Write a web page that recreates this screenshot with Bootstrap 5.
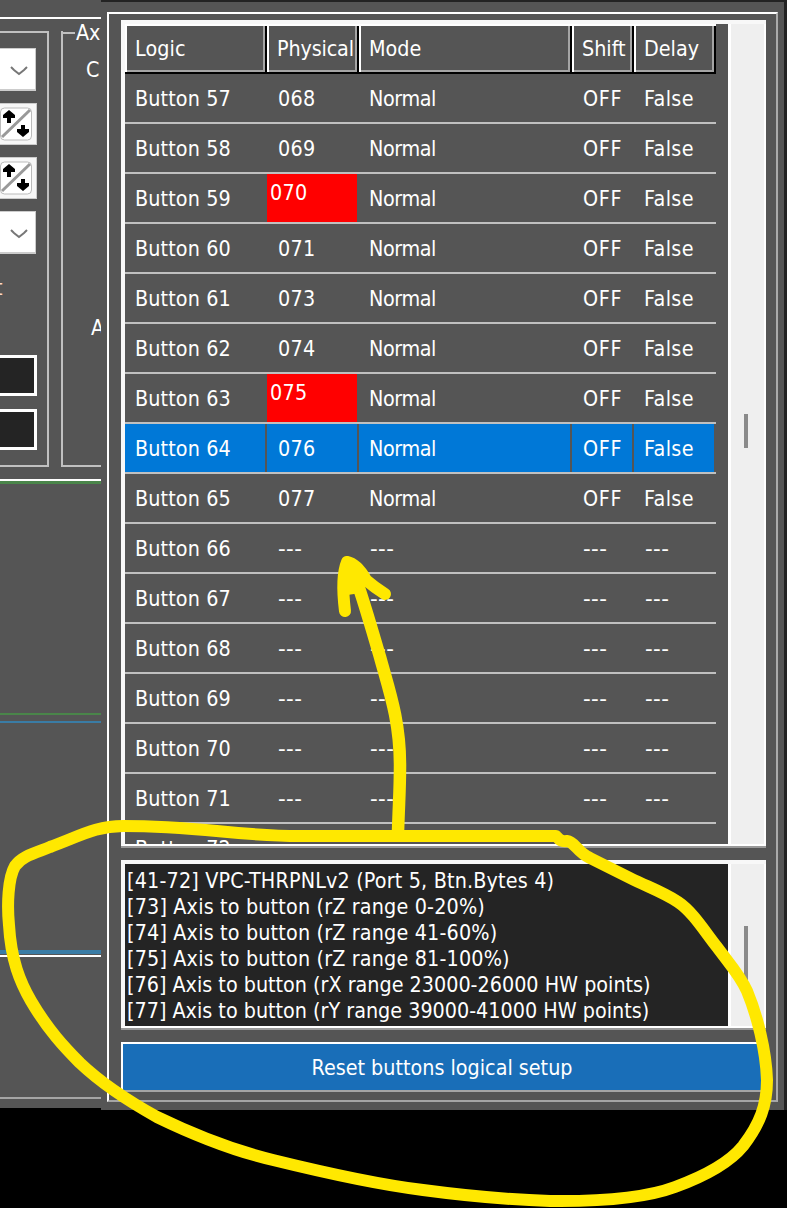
<!DOCTYPE html>
<html lang="en">
<head>
<meta charset="utf-8">
<title>Button logical setup</title>
<link href="https://cdn.jsdelivr.net/npm/bootstrap@5.3.0/dist/css/bootstrap.min.css" rel="stylesheet">
<style>
body{background:#000;color:#fff;font:21.33px/26px "DejaVu Sans Condensed","DejaVu Sans",sans-serif;font-stretch:condensed;letter-spacing:0;width:787px;height:1208px;overflow:hidden}
.tune{width:101px;height:1108px;background:#555;white-space:nowrap}
.line{height:2px;background:#fff}
.green{background:#4a854a}.blue{background:#3a7ca5}.grey{background:#a5a5a5}
.groups{height:436px;margin-top:12px}
.grp-a{width:49px;border:solid #c0c0c0;border-width:2px 2px 2px 0;padding-top:15px}
.grp-b{width:40px;margin-left:12px;border:solid #c0c0c0;border-width:0 0 2px 2px}
.legend{height:26px;margin-top:-11px}
.legend i{width:12px;height:2px;background:#c0c0c0;margin-right:1px}
.combo{width:36px;height:43px;background:#fff;border:solid #ccc;border-width:1px 1px 2px 0}
.flip{width:37px;height:42px;background:#f7f7f7;border:1px solid #ccc;border-left:0}
.edit{width:37px;height:41px;background:#242424;border:3px solid #fff;border-left:0}
.side{width:686px;height:1110px;background:#555;border:solid #232323;border-width:2px 3px 0 0;padding:10px 6px 8px}
.frame{border:2px solid #fff;border-right-color:#aaa;border-bottom-color:#a5a5a5;padding:6px 10px 8px 12px;height:1090px}
.sunk{border:solid #f8f8f8;border-width:4px 0 2px 4px;border-bottom-color:#fff;width:645px;box-shadow:0 2px #999}
.grid-box{height:826px}
.rows{width:603px;overflow:hidden;background:#555}
.rw{display:grid;grid-template-columns:142px 92px 213px 62px 82px;width:591px;height:50px;border-bottom:2px solid #c0c0c0}
.rw>div{padding:12px 0 0 10px;white-space:nowrap;overflow:hidden;letter-spacing:.12px}
.rw>div:nth-child(2){padding-left:11px;letter-spacing:.25px}
.rw>div:nth-child(3){letter-spacing:-.4px}
.rw>div:nth-child(4){letter-spacing:.7px;padding-left:11px}
.rw>div:nth-child(5){letter-spacing:.4px}
.rw>div.none{font-family:"DejaVu Sans",sans-serif;font-stretch:normal;letter-spacing:.4px}
.rw>div.none:nth-child(n+3){padding-left:11px}
.hd{border-bottom:2px solid #000}
.hd>div,.hd>div:nth-child(2),.hd>div:nth-child(4){border:solid #fff;border-width:2px 0 0 2px;padding:10px 0 0 8px;box-shadow:inset -2px 0 #000,inset -4px -2px #a5a5a5}
.hd>div:nth-child(n+2){letter-spacing:0}
.hd>div:nth-child(2){letter-spacing:-.15px}
.rw.sel{background:linear-gradient(#555,#555) 140px 0/2px 100% no-repeat,linear-gradient(#555,#555) 232px 0/2px 100% no-repeat,linear-gradient(#555,#555) 445px 0/2px 100% no-repeat,linear-gradient(#555,#555) 507px 0/2px 100% no-repeat,linear-gradient(#555,#555) 589px 0/2px 100% no-repeat,#0078d7}
.rw>div.dup{background:linear-gradient(red,red) 0 0/90px 100% no-repeat;padding:6px 0 0 3px}
.bar{width:38px;background:#efefef;border:solid #fff;border-width:0 2px 0 3px;padding-left:13px}
.thumb{width:4px;background:#8a8a8a}
.log{height:168px;margin-top:14px}
.log-text{width:603px;background:#242424;padding:4px 0 0 2px;white-space:nowrap}
.wide{letter-spacing:.17px}
.reset{height:50px;width:645px;margin-top:14px;background:#196eb8;border:solid #fff;border-width:2px 0 2px 2px;border-bottom-color:#a5a5a5;border-radius:0;color:#fff;font:inherit;letter-spacing:0;padding:2px 5px 0 0}
.ink{left:0;top:0;pointer-events:none}
</style>
</head>
<body class="position-relative">
<div class="d-flex align-items-start">
 <section class="tune overflow-hidden flex-shrink-0">
  <div class="line" style="margin-top:17px"></div>
  <div class="groups d-flex">
   <div class="grp-a">
    <div class="combo"><svg width="35" height="40"><path d="M11 18l3 3 5 4 5-4 3-3" fill="none" stroke="#777" stroke-width="2"/></svg></div>
    <div class="flip" style="margin-top:12px"><svg class="d-block" width="36" height="40"><rect x=".5" y="4" width="31" height="32" rx="4" fill="#fff" stroke="#bbb"/><path d="M2 33L30 6" stroke="#999" stroke-width="3"/><path d="M9 6l6 5v3h-4v5H7v-5H3v-3zM23 33l-6-5v-3h4v-4h4v4h4v3z"/></svg></div>
    <div class="flip" style="margin-top:12px"><svg class="d-block" width="36" height="40"><rect x=".5" y="4" width="31" height="32" rx="4" fill="#fff" stroke="#bbb"/><path d="M2 33L30 6" stroke="#999" stroke-width="3"/><path d="M9 6l6 5v3h-4v5H7v-5H3v-3zM23 33l-6-5v-3h4v-4h4v4h4v3z"/></svg></div>
    <div class="combo" style="margin-top:12px"><svg width="35" height="40"><path d="M11 18l3 3 5 4 5-4 3-3" fill="none" stroke="#777" stroke-width="2"/></svg></div>
    <div style="margin:21px 0 0 -5px;color:#ffdcc8">t</div>
    <div class="edit" style="margin-top:54px"></div>
    <div class="edit" style="margin-top:13px"></div>
   </div>
   <div class="grp-b d-flex flex-column">
    <div class="legend d-flex align-items-center"><i></i><span>Ax</span></div>
    <div style="margin:11px 0 0 23px">C</div>
    <div style="margin:232px 0 0 28px">A</div>
   </div>
  </div>
  <div class="line" style="margin-top:12px"></div>
  <div class="line green" style="height:3px"></div>
  <div class="line green" style="margin-top:229px"></div>
  <div class="line blue" style="margin-top:6px"></div>
  <div class="line blue" style="margin-top:227px;height:4px"></div>
  <div class="line" style="margin-top:1px"></div>
  <div class="line grey" style="margin-top:140px"></div>
 </section>
 <main class="side flex-shrink-0">
  <div class="frame">
   <div class="sunk grid-box d-flex">
    <div class="rows" id="rows"><div class="rw hd"><div>Logic</div><div>Physical</div><div>Mode</div><div>Shift</div><div>Delay</div></div></div>
    <div class="bar"><div class="thumb" style="height:34px;margin-top:390px"></div></div>
   </div>
   <div class="sunk log d-flex">
    <div class="log-text"><span class="wide">[41-72] VPC-THRPNLv2 (Port 5, Btn.Bytes 4)<br>[73] Axis to button (rZ range 0-20%)<br>[74] Axis to button (rZ range 41-60%)<br>[75] Axis to button (rZ range 81-100%)</span><br>[76] Axis to button (rX range 23000-26000 HW points)<br>[77] Axis to button (rY range 39000-41000 HW points)</div>
    <div class="bar"><div class="thumb" style="height:60px;margin-top:62px"></div></div>
   </div>
   <button class="btn reset">Reset buttons logical setup</button>
  </div>
 </main>
</div>
<svg class="ink position-absolute" width="787" height="1208" fill="none" stroke="#ffe800" stroke-width="12" stroke-linecap="round" stroke-linejoin="round">
 <path d="M556 836H300C235 836 200 826 123 826C96 826 80 836 50 847C35 853 22 856 15 866C8 878 7 905 9 925C11 960 20 982 31 1001C48 1030 65 1048 80 1063C100 1082 130 1102 157 1117C190 1133 235 1151 273 1160C330 1174 390 1186 423 1190Q490 1199 550 1201Q635 1202 675 1187C705 1176 730 1162 743 1146C760 1124 767 1105 767 1080C766 1050 757 1015 747 991C740 975 728 962 717 947C705 932 693 912 678 902C663 892 648 887 630 878L590 858C577 852 575 842 567 841Q561 842 558 838"/>
 <path stroke-width="12.5" d="M398 832C399 800 400 790 400 765C400 720 389 690 380 657C372 630 365 605 357 582"/>
 <path d="M345 611C343 595 342 574 347 562Q357 564 366 580Q374 587 385 594"/>
 <path d="M347 562L347 592L360 590L366 580Q357 562 347 562Z" fill="#ffe800" stroke-width="6"/>
</svg>
<script>
const phys = ['068','069','070','071','073','074','075','076','077'];
const cell = (text, cls = '') => `<div class="${text ? cls : 'none'}">${text || '---'}</div>`;
let html = '';
for (let n = 57; n <= 72; n++) {
  const p = phys[n - 57];
  html += `<div class="rw${n === 64 ? ' sel' : ''}">` + cell('Button ' + n)
    + cell(p, p === '070' || p === '075' ? 'dup' : '')
    + cell(p && 'Normal') + cell(p && 'OFF') + cell(p && 'False') + '</div>';
}
document.getElementById('rows').insertAdjacentHTML('beforeend', html);
</script>
<script src="https://cdn.jsdelivr.net/npm/bootstrap@5.3.0/dist/js/bootstrap.bundle.min.js"></script>
</body>
</html>
